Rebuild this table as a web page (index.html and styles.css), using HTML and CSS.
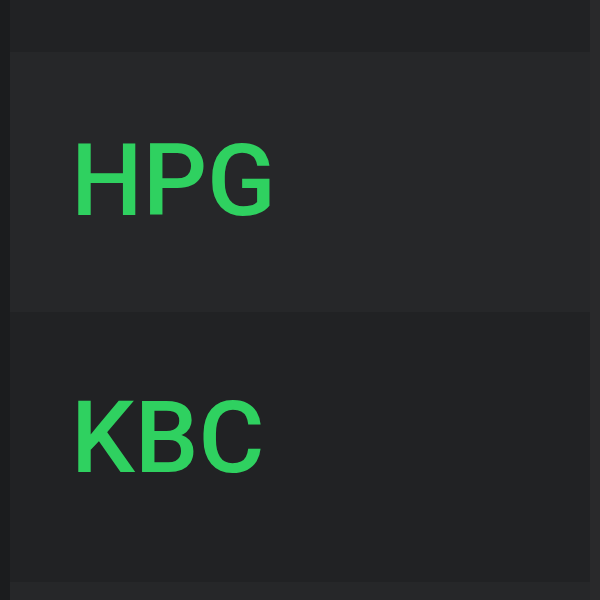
FILE: index.html
```html
<!DOCTYPE html>
<html lang="en">
<head>
    <meta charset="UTF-8" />
    <title>Tickers</title>
    <link rel="stylesheet" href="styles.css">
</head>
<body>
<div class="frame">
    <div class="gutter"></div>
    <div class="list">
        <div class="list-head"></div>
        <div class="row row-odd">
            <span class="ticker">HPG</span>
        </div>
        <div class="row row-even">
            <span class="ticker">KBC</span>
        </div>
        <div class="list-foot"></div>
    </div>
    <div class="scroll-edge"></div>
</div>
</body>
</html>
```

FILE: styles.css
```css
body {
    margin: 0;
    background-color: #212224;
    font-family: Roboto, 'Liberation Sans', sans-serif;
}

.frame {
    display: flex;
    width: 600px;
    height: 600px;
    overflow: hidden;
}

.gutter {
    width: 10px;
    background-color: #1b1c1e;
}

.list {
    flex: 1;
    display: flex;
    flex-direction: column;
}

.list-head {
    height: 52px;
    background-color: #212224;
}

.row {
    box-sizing: border-box;
    padding-left: 61px;
}

.row-odd {
    height: 260px;
    padding-top: 78px;
    background-color: #262729;
}

.row-even {
    height: 270px;
    padding-top: 75px;
    background-color: #212224;
}

.list-foot {
    flex: 1;
    background-color: #262729;
}

.ticker {
    display: block;
    font-size: 101px;
    line-height: 1;
    font-weight: 500;
    color: #2fd160;
}

.scroll-edge {
    width: 10px;
    background-color: #29292b;
}
```
